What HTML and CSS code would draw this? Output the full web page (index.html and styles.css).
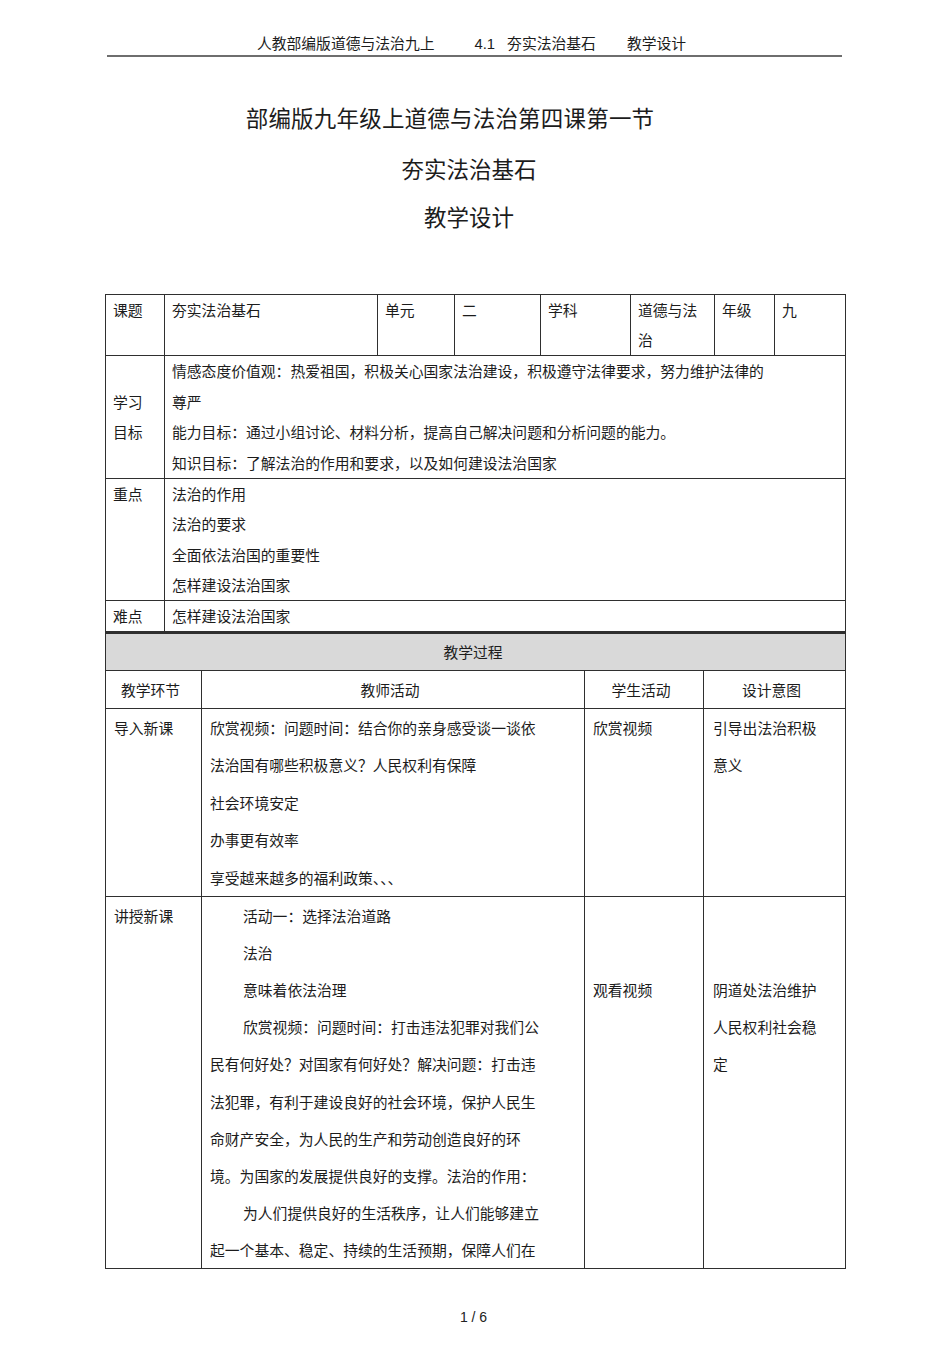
FILE: index.html
```html
<!DOCTYPE html>
<html lang="zh-CN">
<head>
<meta charset="utf-8">
<title>夯实法治基石 教学设计</title>
<link rel="stylesheet" href="styles.css">
</head>
<body>
<div class="page">
  <div class="header">
    <span>人教部编版道德与法治九上</span><span class="h-num">4.1</span><span class="h-sec">夯实法治基石</span><span class="h-last">教学设计</span>
  </div>

  <div class="titles">
    <div class="t1">部编版九年级上道德与法治第四课第一节</div>
    <div class="t2">夯实法治基石</div>
    <div class="t3">教学设计</div>
  </div>

  <table class="info">
    <colgroup>
      <col class="c1"><col class="c2"><col class="c3"><col class="c4"><col class="c5"><col class="c6"><col class="c7"><col class="c8">
    </colgroup>
    <tr class="r-top">
      <td>课题</td>
      <td>夯实法治基石</td>
      <td>单元</td>
      <td>二</td>
      <td>学科</td>
      <td>道德与法<br>治</td>
      <td>年级</td>
      <td>九</td>
    </tr>
    <tr class="r-goal">
      <td class="mid">学习<br>目标</td>
      <td colspan="7">情感态度价值观：热爱祖国，积极关心国家法治建设，积极遵守法律要求，努力维护法律的<br>尊严<br>能力目标：通过小组讨论、材料分析，提高自己解决问题和分析问题的能力。<br>知识目标：了解法治的作用和要求，以及如何建设法治国家</td>
    </tr>
    <tr class="r-key">
      <td>重点</td>
      <td colspan="7">法治的作用<br>法治的要求<br>全面依法治国的重要性<br>怎样建设法治国家</td>
    </tr>
    <tr class="r-hard">
      <td>难点</td>
      <td colspan="7">怎样建设法治国家</td>
    </tr>
  </table>

  <table class="process">
    <colgroup>
      <col class="p1"><col class="p2"><col class="p3"><col class="p4">
    </colgroup>
    <tr class="r-gray">
      <td colspan="4">教学过程</td>
    </tr>
    <tr class="r-head">
      <td>教学环节</td>
      <td>教师活动</td>
      <td>学生活动</td>
      <td>设计意图</td>
    </tr>
    <tr class="r-body r-intro">
      <td>导入新课</td>
      <td>欣赏视频：问题时间：结合你的亲身感受谈一谈依<br>法治国有哪些积极意义？人民权利有保障<br>社会环境安定<br>办事更有效率<br>享受越来越多的福利政策、、、</td>
      <td>欣赏视频</td>
      <td>引导出法治积极<br>意义</td>
    </tr>
    <tr class="r-body r-teach">
      <td>讲授新课</td>
      <td>
        <p class="ind">活动一：选择法治道路</p>
        <p class="ind">法治</p>
        <p class="ind">意味着依法治理</p>
        <p class="ind">欣赏视频：问题时间：打击违法犯罪对我们公<br>民有何好处？对国家有何好处？解决问题：打击违<br>法犯罪，有利于建设良好的社会环境，保护人民生<br>命财产安全，为人民的生产和劳动创造良好的环<br>境。为国家的发展提供良好的支撑。法治的作用：</p>
        <p class="ind">为人们提供良好的生活秩序，让人们能够建立<br>起一个基本、稳定、持续的生活预期，保障人们在</p>
      </td>
      <td><div class="offset">观看视频</div></td>
      <td><div class="offset">阴道处法治维护<br>人民权利社会稳<br>定</div></td>
    </tr>
  </table>

  <div class="pageno">1 / 6</div>
</div>
</body>
</html>
```

FILE: styles.css
```css
html, body {
  margin: 0;
  padding: 0;
  background: #ffffff;
}

body {
  font-family: "Liberation Sans", "Noto Sans CJK SC", sans-serif;
  color: #1c1c1c;
}

.page {
  width: 950px;
}

.header {
  margin: 0 108px 0 107px;
  padding: 34px 6px 1px 0;
  line-height: 20px;
  font-size: 14.8px;
  text-align: center;
  border-bottom: 2px solid #6e6e6e;
  white-space: nowrap;
}

.h-num {
  margin-left: 40px;
}

.h-sec {
  margin-left: 12px;
}

.h-last {
  margin-left: 31px;
}

.titles {
  margin-top: 45px;
  padding-right: 12px;
  text-align: center;
  font-size: 22.5px;
  line-height: 30px;
  font-family: "Noto Sans CJK SC", sans-serif;
}

.t1 {
  padding-right: 38px;
  letter-spacing: 0.2px;
}

.t2 {
  margin-top: 21px;
}

.t3 {
  margin-top: 18px;
}

table {
  border-collapse: collapse;
  table-layout: fixed;
  width: 740px;
  margin-left: 105px;
  font-size: 14.8px;
  font-family: "Noto Sans CJK SC", sans-serif;
}

td {
  border: 1px solid #2f2f2f;
  padding: 0 6px 0 7px;
  vertical-align: top;
  white-space: nowrap;
}

.info {
  margin-top: 63px;
}

.info td {
  line-height: 30.5px;
}

.info .r-top td {
  line-height: 30px;
}

.info .r-key td {
  line-height: 30.25px;
}

.info .r-hard td {
  line-height: 30px;
}

.c1 { width: 59px; }
.c2 { width: 213px; }
.c3 { width: 77px; }
.c4 { width: 86px; }
.c5 { width: 90px; }
.c6 { width: 84px; }
.c7 { width: 60px; }
.c8 { width: 71px; }

.info td.mid {
  vertical-align: middle;
}

.process {
  border-top: 2px solid #2f2f2f;
}

.p1 { width: 96px; }
.p2 { width: 383px; }
.p3 { width: 119px; }
.p4 { width: 142px; }

.r-gray td {
  background: #d9d9d9;
  height: 36px;
  line-height: 36px;
  text-align: center;
  padding-right: 12px;
}

.r-head td {
  height: 37px;
  line-height: 37px;
  text-align: center;
  padding: 0 6px 0 0;
}

.r-body td {
  line-height: 37.4px;
  padding-left: 8px;
}

.r-teach td {
  line-height: 37.1px;
}

.r-body td:nth-child(4) {
  padding-left: 9px;
}

.ind {
  margin: 0;
  text-indent: 33px;
}

.offset {
  padding-top: 74.2px;
}

.pageno {
  margin-top: 38px;
  text-align: center;
  font-size: 14px;
  line-height: 20px;
  padding-right: 3px;
  color: #222;
}
```
